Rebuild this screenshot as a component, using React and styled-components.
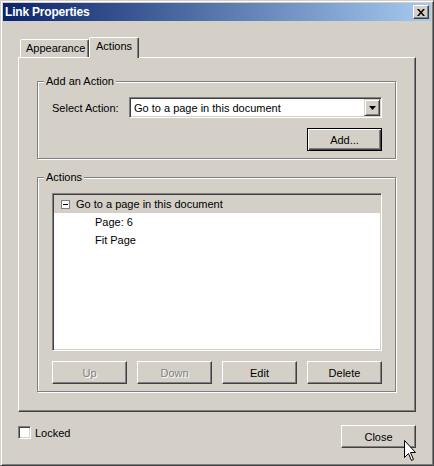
import styled, { createGlobalStyle } from "styled-components";

const GlobalStyle = createGlobalStyle`
  html, body {
    margin: 0;
    padding: 0;
    background: #d4d0c8;
  }

  body {
    font-family: "Liberation Sans", Arial, sans-serif;
    font-size: 11px;
    color: #000;
  }
`;

export default function App() {
  return (
    <>
      <GlobalStyle />
      <Window>
        <TitleBar>
          <Title>Link Properties</Title>
          <TitleClose>
            <svg width="8" height="7" viewBox="0 0 8 7">
              <path d="M0 0h2l2 2.5L6 0h2L5 3.5 8 7H6L4 4.5 2 7H0l3-3.5z" fill="#000" />
            </svg>
          </TitleClose>
        </TitleBar>

        <Body>
          <TabRow>
            <Tab $width={69}>Appearance</Tab>
            <Tab $width={50} $active>
              Actions
            </Tab>
          </TabRow>

          <TabPanel>
            <Group>
              <Legend>Add an Action</Legend>
              <GroupBody $gap={10}>
                <SelectRow>
                  <FieldLabel>Select Action:</FieldLabel>
                  <Select>
                    <SelectValue>Go to a page in this document</SelectValue>
                    <DropButton>
                      <svg width="7" height="4" viewBox="0 0 7 4">
                        <path d="M0 0h7L3.5 4z" fill="#000" />
                      </svg>
                    </DropButton>
                  </Select>
                </SelectRow>
                <RightRow>
                  <Button $default>Add...</Button>
                </RightRow>
              </GroupBody>
            </Group>

            <Group $grow>
              <Legend>Actions</Legend>
              <GroupBody $gap={10} $grow>
                <ListBox>
                  <ListRow $selected>
                    <TreeBox>
                      <svg width="5" height="1" viewBox="0 0 5 1">
                        <rect width="5" height="1" fill="#000" />
                      </svg>
                    </TreeBox>
                    Go to a page in this document
                  </ListRow>
                  <ListRow $indent={41}>Page: 6</ListRow>
                  <ListRow $indent={41}>Fit Page</ListRow>
                </ListBox>
                <ButtonRow>
                  <Button disabled>Up</Button>
                  <Button disabled>Down</Button>
                  <Button>Edit</Button>
                  <Button>Delete</Button>
                </ButtonRow>
              </GroupBody>
            </Group>
          </TabPanel>

          <Footer>
            <CheckLabel>
              <CheckBox />
              <span>Locked</span>
            </CheckLabel>
            <Button>Close</Button>
          </Footer>
        </Body>

        <Cursor width="12" height="21" viewBox="0 0 12 21">
          <path
            d="M0.5 0.5V17.5L4.5 13.5L7.5 20.5L9.5 19.5L6.5 12.5H11.5Z"
            fill="#fff"
            stroke="#000"
            strokeWidth="1"
          />
        </Cursor>
      </Window>
    </>
  );
}

const Window = styled.div`
  position: relative;
  width: 434px;
  height: 466px;
  padding: 2px;

  display: flex;
  flex-direction: column;

  box-sizing: border-box;
  border: 1px solid;
  border-color: #d4d0c8 #404040 #404040 #d4d0c8;
  box-shadow: inset 1px 1px #fff, inset -1px -1px #808080;
  background: #d4d0c8;
`;

const TitleBar = styled.div`
  height: 18px;
  padding: 0 2px;

  display: flex;
  align-items: center;
  justify-content: space-between;

  box-sizing: border-box;
  background: linear-gradient(to right, #0a246a, #a6caf0);
`;

const Title = styled.span`
  color: #fff;
  font-size: 12px;
  font-weight: 700;
  letter-spacing: -0.2px;
`;

const TitleClose = styled.div`
  width: 16px;
  height: 14px;

  display: flex;
  align-items: center;
  justify-content: center;

  box-sizing: border-box;
  border: 1px solid;
  border-color: #fff #404040 #404040 #fff;
  box-shadow: inset -1px -1px #808080;
  background: #d4d0c8;
`;

const Body = styled.div`
  flex: 1;
  padding: 16px 15px 15px;

  display: flex;
  flex-direction: column;
`;

const TabRow = styled.div`
  height: 20px;
  padding-left: 2px;

  display: flex;
  align-items: flex-end;
`;

const Tab = styled.div`
  position: relative;
  width: ${({ $width }) => $width}px;
  height: ${({ $active }) => ($active ? 21 : 18)}px;
  margin-bottom: ${({ $active }) => ($active ? -1 : 0)}px;
  padding: 2px 0 0 ${({ $active }) => ($active ? 6 : 5)}px;
  z-index: ${({ $active }) => ($active ? 1 : 0)};

  box-sizing: border-box;
  border: 1px solid;
  border-bottom: none;
  border-color: #fff #404040 transparent #fff;
  border-radius: 2px 2px 0 0;
  box-shadow: inset -1px 0 #808080;
  background: #d4d0c8;

  line-height: 13px;
`;

const TabPanel = styled.div`
  flex: 1;
  padding: 17px 19px 19px 18px;

  display: flex;
  flex-direction: column;
  gap: 12px;

  border: 1px solid;
  border-color: #fff #404040 #404040 #fff;
  box-shadow: inset -1px -1px #808080;
`;

const Group = styled.fieldset`
  flex: ${({ $grow }) => ($grow ? 1 : "none")};
  min-width: 0;
  margin: 0;
  padding: 0;

  display: flex;
  flex-direction: column;

  border: 1px solid #808080;
  box-shadow: inset 1px 1px #fff, 1px 1px #fff;
`;

const Legend = styled.legend`
  margin-left: 6px;
  padding: 0 2px;

  background: #d4d0c8;
  line-height: 13px;
`;

const GroupBody = styled.div`
  flex: ${({ $grow }) => ($grow ? 1 : "none")};
  padding: 9px 13px 7px 14px;

  display: flex;
  flex-direction: column;
  gap: ${({ $gap }) => $gap}px;
`;

const SelectRow = styled.div`
  display: flex;
  align-items: center;
`;

const FieldLabel = styled.span`
  width: 77px;
  flex-shrink: 0;
`;

const Sunken = styled.div`
  box-sizing: border-box;
  border: 1px solid;
  border-color: #808080 #fff #fff #808080;
  box-shadow: inset 1px 1px #404040, inset -1px -1px #d4d0c8;
  background: #fff;
`;

const Select = styled(Sunken)`
  flex: 1;
  height: 21px;
  padding: 1px;

  display: flex;
  align-items: stretch;
`;

const SelectValue = styled.span`
  flex: 1;
  padding-left: 3px;

  display: flex;
  align-items: center;
`;

const DropButton = styled.div`
  width: 16px;

  display: flex;
  align-items: center;
  justify-content: center;

  box-sizing: border-box;
  border: 1px solid;
  border-color: #d4d0c8 #404040 #404040 #d4d0c8;
  box-shadow: inset 1px 1px #fff, inset -1px -1px #808080;
  background: #d4d0c8;
`;

const RightRow = styled.div`
  display: flex;
  justify-content: flex-end;
`;

const Button = styled.button`
  width: 75px;
  height: 23px;
  padding: 0;

  box-sizing: border-box;
  border: 1px solid;
  border-color: ${({ $default }) =>
    $default ? "#000" : "#fff #404040 #404040 #fff"};
  box-shadow: ${({ $default }) =>
    $default
      ? "inset 1px 1px #fff, inset -1px -1px #404040, inset -2px -2px #808080"
      : "inset -1px -1px #808080"};
  background: #d4d0c8;

  font-family: inherit;
  font-size: 11px;
  color: #000;

  &:disabled {
    color: #808080;
    text-shadow: 1px 1px 0 #fff;
  }
`;

const ListBox = styled(Sunken)`
  flex: 1;
  padding: 1px;
`;

const ListRow = styled.div`
  height: 18px;
  padding-left: ${({ $indent }) => $indent ?? 7}px;

  display: flex;
  align-items: center;

  background: ${({ $selected }) => ($selected ? "#d4d0c8" : "transparent")};
`;

const TreeBox = styled.span`
  width: 9px;
  height: 9px;
  margin-right: 6px;

  display: flex;
  align-items: center;
  justify-content: center;

  box-sizing: border-box;
  border: 1px solid #808080;
  background: #fff;
`;

const ButtonRow = styled.div`
  display: flex;
  justify-content: space-between;
`;

const Footer = styled.div`
  height: 23px;
  margin-top: 13px;

  display: flex;
  align-items: flex-start;
  justify-content: space-between;
`;

const CheckLabel = styled.label`
  margin-top: 1px;

  display: flex;
  align-items: center;
  gap: 4px;
`;

const CheckBox = styled(Sunken)`
  width: 13px;
  height: 13px;
`;

const Cursor = styled.svg`
  position: absolute;
  left: 403px;
  top: 439px;
`;
